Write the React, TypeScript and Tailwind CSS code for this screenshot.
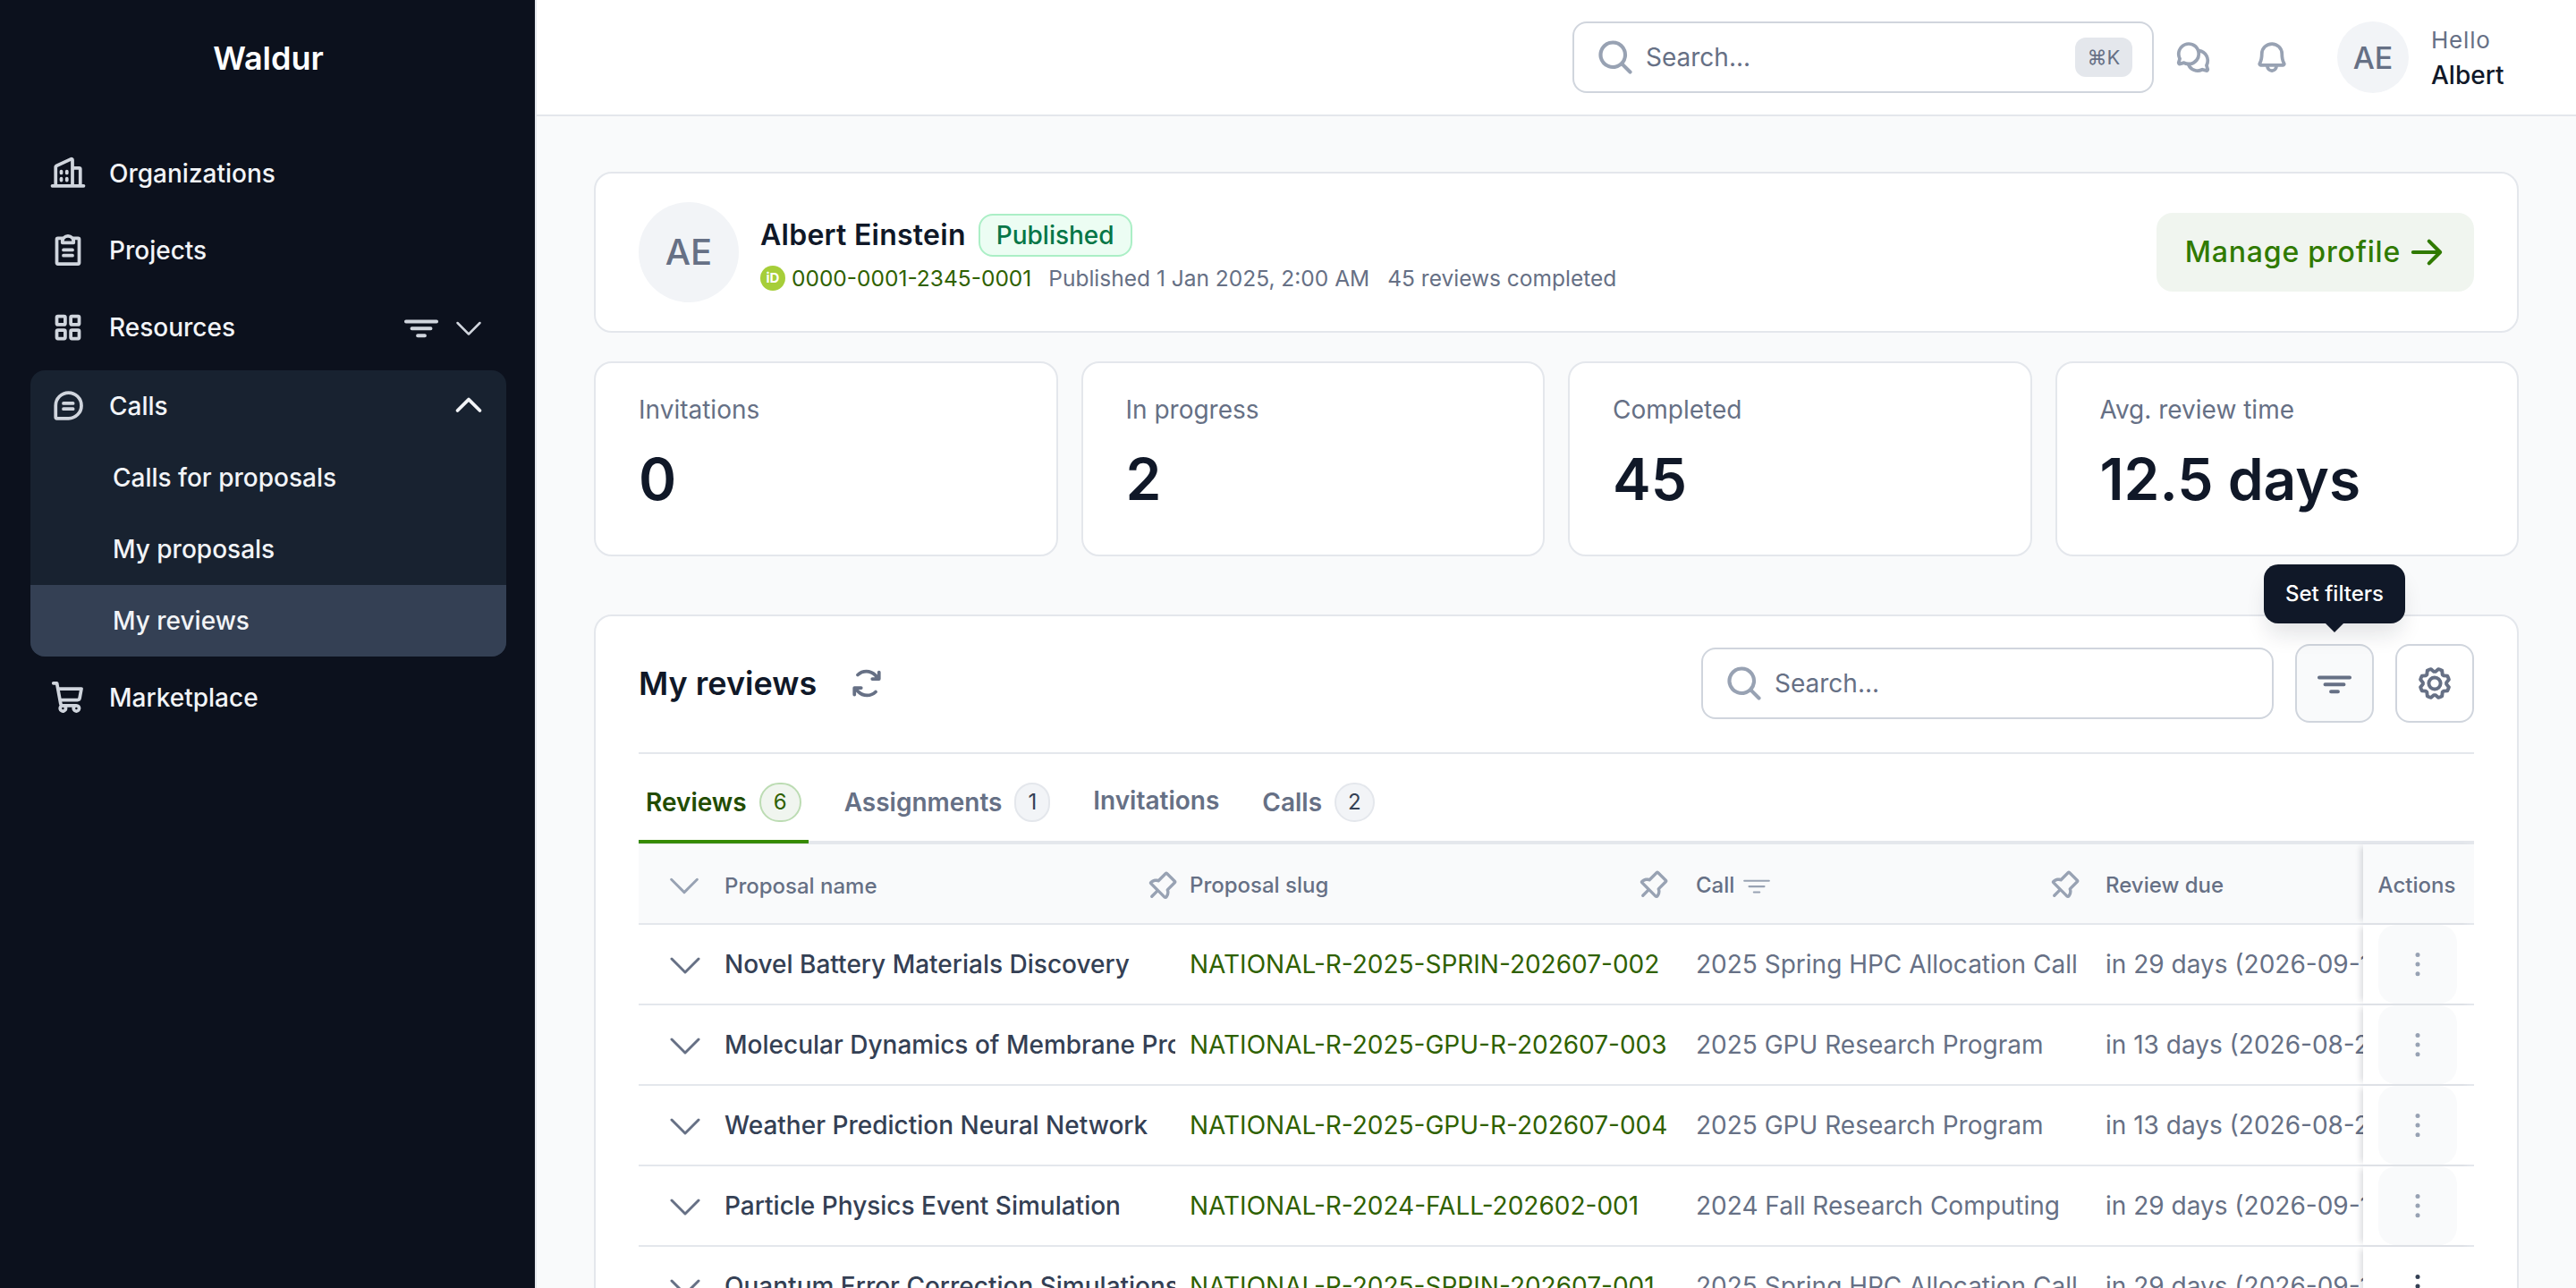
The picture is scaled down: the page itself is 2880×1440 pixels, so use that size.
import type { ReactNode } from 'react';
import {
  PiArrowRightBold,
  PiArrowsClockwiseBold,
  PiBellBold,
  PiBuildingsBold,
  PiCaretDown,
  PiCaretUpBold,
  PiChatsCircleBold,
  PiChatTeardropTextBold,
  PiClipboardTextBold,
  PiDotsThreeVerticalBold,
  PiFunnelSimple,
  PiFunnelSimpleBold,
  PiGearBold,
  PiMagnifyingGlassBold,
  PiPushPinBold,
  PiShoppingCartBold,
  PiSquaresFourBold,
} from 'react-icons/pi';

interface Review {
  name: string;
  slug: string;
  call: string;
  due: string;
}

const reviews: Review[] = [
  { name: 'Novel Battery Materials Discovery', slug: 'NATIONAL-R-2025-SPRIN-202607-002', call: '2025 Spring HPC Allocation Call', due: 'in 29 days (2026-09-15)' },
  { name: 'Molecular Dynamics of Membrane Proteins', slug: 'NATIONAL-R-2025-GPU-R-202607-003', call: '2025 GPU Research Program', due: 'in 13 days (2026-08-28)' },
  { name: 'Weather Prediction Neural Network', slug: 'NATIONAL-R-2025-GPU-R-202607-004', call: '2025 GPU Research Program', due: 'in 13 days (2026-08-28)' },
  { name: 'Particle Physics Event Simulation', slug: 'NATIONAL-R-2024-FALL-202602-001', call: '2024 Fall Research Computing', due: 'in 29 days (2026-09-15)' },
  { name: 'Quantum Error Correction Simulations', slug: 'NATIONAL-R-2025-SPRIN-202607-001', call: '2025 Spring HPC Allocation Call', due: 'in 29 days (2026-09-15)' },
];

const stats = [
  { label: 'Invitations', value: '0' },
  { label: 'In progress', value: '2' },
  { label: 'Completed', value: '45' },
  { label: 'Avg. review time', value: '12.5 days' },
];

function NavItem({ icon, label, trailing }: { icon: ReactNode; label: string; trailing?: ReactNode }) {
  return (
    <div className="flex h-[80px] items-center px-[22px] text-[28px] font-medium text-[#f2f4f7]">
      <span className="flex w-[40px] justify-center text-[40px] text-[#d0d5dd]">{icon}</span>
      <span className="ml-[26px] flex-1">{label}</span>
      {trailing}
    </div>
  );
}

function Sidebar() {
  return (
    <aside className="flex w-[598px] shrink-0 flex-col bg-[#0c111d] pl-[34px] pr-[32px]">
      <div className="flex h-[130px] shrink-0 items-center justify-center text-[36px] font-semibold text-white">Waldur</div>
      <nav className="mt-[24px] flex flex-col gap-[6px]">
        <NavItem icon={<PiBuildingsBold />} label="Organizations" />
        <NavItem icon={<PiClipboardTextBold />} label="Projects" />
        <NavItem
          icon={<PiSquaresFourBold />}
          label="Resources"
          trailing={
            <span className="flex items-center gap-[12px] text-[#d0d5dd]">
              <PiFunnelSimpleBold className="text-[42px]" />
              <PiCaretDown className="text-[40px]" />
            </span>
          }
        />
        <div className="mt-[2px] overflow-hidden rounded-[16px] bg-[#182230]">
          <NavItem icon={<PiChatTeardropTextBold />} label="Calls" trailing={<PiCaretUpBold className="text-[40px] text-[#f2f4f7]" />} />
          <div className="flex h-[80px] items-center pl-[92px] text-[28px] font-medium text-[#f2f4f7]">Calls for proposals</div>
          <div className="flex h-[80px] items-center pl-[92px] text-[28px] font-medium text-[#f2f4f7]">My proposals</div>
          <div className="flex h-[80px] items-center bg-[#344054] pl-[92px] text-[28px] font-medium text-[#f2f4f7]">My reviews</div>
        </div>
        <NavItem icon={<PiShoppingCartBold />} label="Marketplace" />
      </nav>
    </aside>
  );
}

function Topbar() {
  return (
    <header className="flex h-[130px] shrink-0 items-center border-b-2 border-[#e4e7ec] bg-white pr-[80px]">
      <div className="ml-auto flex h-[80px] w-[650px] items-center rounded-[16px] border-2 border-[#d0d5dd] pl-[24px] pr-[22px]">
        <PiMagnifyingGlassBold className="text-[44px] text-[#98a2b3]" />
        <span className="ml-[12px] flex-1 text-[28px] text-[#667085]">Search...</span>
        <span className="flex h-[44px] w-[64px] items-center justify-center rounded-[12px] bg-[#e4e7ec] font-['Inter','DejaVu_Sans',sans-serif] text-[22px] text-[#667085]">⌘K</span>
      </div>
      <PiChatsCircleBold className="ml-[24px] text-[40px] text-[#98a2b3]" />
      <PiBellBold className="ml-[48px] text-[40px] text-[#98a2b3]" />
      <div className="ml-[53px] flex h-[80px] w-[80px] items-center justify-center rounded-full bg-[#f2f4f7] text-[34px] font-medium text-[#667085]">AE</div>
      <div className="ml-[25px] flex w-[82px] flex-col">
        <span className="text-[26px] leading-[40px] tracking-[0.8px] text-[#667085]">Hello</span>
        <span className="text-[28px] font-medium leading-[38px] text-[#101828]">Albert</span>
      </div>
    </header>
  );
}

function ProfileCard() {
  return (
    <div className="flex h-[180px] items-center rounded-[20px] border-2 border-[#e4e7ec] bg-white px-[48px]">
      <div className="flex h-[112px] w-[112px] items-center justify-center rounded-full bg-[#f2f4f7] text-[40px] font-medium text-[#667085]">AE</div>
      <div className="ml-[24px] flex-1">
        <div className="flex items-center">
          <span className="text-[32px] font-semibold tracking-[0.25px] text-[#101828]">Albert Einstein</span>
          <span className="ml-[14px] flex h-[48px] items-center rounded-[16px] border-2 border-[#abefc6] bg-[#ecfdf3] px-[18px] text-[28px] font-medium text-[#067647]">Published</span>
        </div>
        <div className="mt-[10px] flex items-center text-[24.5px] leading-[28px] text-[#667085]">
          <span className="flex h-[28px] w-[28px] items-center justify-center rounded-full bg-[#a6ce39] text-[15px] font-bold text-white">iD</span>
          <span className="ml-[7px] text-[#2f6100]">0000-0001-2345-0001</span>
          <span className="ml-[19px]">Published 1 Jan 2025, 2:00 AM</span>
          <span className="ml-[20px]">45 reviews completed</span>
        </div>
      </div>
      <button className="flex h-[88px] items-center gap-[7px] rounded-[18px] bg-[#f0f5ef] pl-[32px] pr-[31px] text-[32px] font-medium tracking-[0.8px] text-[#307a00]">
        Manage profile
        <PiArrowRightBold className="text-[44px]" />
      </button>
    </div>
  );
}

function Tab({ label, count, active }: { label: string; count?: string; active?: boolean }) {
  return (
    <div className={`flex h-[100px] items-center gap-[14px] border-b-4 px-2 pt-[12px] ${active ? 'border-[#368a00]' : 'border-transparent'}`}>
      <span className={`text-[28px] font-semibold ${active ? 'text-[#224c00]' : 'text-[#667085]'} ${count ? '' : 'pb-[4px]'}`}>{label}</span>
      {count && (
        <span className={`flex h-[44px] items-center justify-center rounded-full border-2 text-[24px] ${active ? 'border-[#bcdcb3] bg-[#f0f5ef] px-[14px] text-[#2f6100]' : 'border-[#e4e7ec] bg-[#f2f4f7] px-[13px] text-[#344054]'}`}>{count}</span>
      )}
    </div>
  );
}

function HeadCell({ label, pin, funnel, className }: { label: string; pin?: boolean; funnel?: boolean; className: string }) {
  return (
    <div className={`flex items-center pt-[3px] ${className}`}>
      <span className="text-[24px] font-medium text-[#667085]">{label}</span>
      {funnel && <PiFunnelSimple className="ml-[8px] text-[34px] text-[#98a2b3]" />}
      {pin && <PiPushPinBold className="ml-auto text-[36px] text-[#98a2b3]" />}
    </div>
  );
}

function ReviewRow({ review, last }: { review: Review; last?: boolean }) {
  return (
    <div className="grid h-[90px] grid-cols-[608px_558px_458px_304px_124px] border-b-2 border-[#e4e7ec] text-[28px]">
      <div className="relative overflow-hidden whitespace-nowrap">
        <div className="flex h-full items-center">
          <PiCaretDown className="ml-[28px] shrink-0 text-[48px] text-[#667085]" />
          <span className="ml-[20px] mr-[8px] overflow-hidden font-medium text-[#344054]">{review.name}</span>
        </div>
      </div>
      <div className="flex items-center overflow-hidden whitespace-nowrap pl-[8px] text-[#2f6100]">{review.slug}</div>
      <div className="flex items-center overflow-hidden whitespace-nowrap pl-[16px] text-[#667085]">{review.call}</div>
      <div className="flex items-center overflow-hidden whitespace-nowrap pl-[16px] text-[#667085]">{review.due}</div>
      <div className="flex items-start justify-center bg-white pr-[2px] shadow-[-6px_0_6px_-3px_rgba(16,24,40,0.14)]">
        <div className={`flex h-[88px] w-[88px] items-center justify-center rounded-[20px] ${last ? 'text-[#344054]' : 'bg-[#f9fafb] text-[#98a2b3]'}`}>
          <PiDotsThreeVerticalBold className="text-[40px]" />
        </div>
      </div>
    </div>
  );
}

function ReviewsCard() {
  return (
    <div className="relative mt-[65px] rounded-t-[20px] border-2 border-[#e4e7ec] bg-white px-[48px]">
      <div className="flex items-center border-b-2 border-[#e4e7ec] pb-[33px] pt-[31px]">
        <h2 className="text-[36px] font-semibold text-[#101828]">My reviews</h2>
        <PiArrowsClockwiseBold className="ml-[36px] text-[40px] text-[#667085]" />
        <div className="ml-auto flex h-[80px] w-[640px] items-center rounded-[16px] border-2 border-[#d0d5dd] pl-[24px]">
          <PiMagnifyingGlassBold className="text-[44px] text-[#98a2b3]" />
          <span className="ml-[12px] text-[28px] text-[#667085]">Search...</span>
        </div>
        <div className="ml-[24px] flex h-[88px] w-[88px] items-center justify-center rounded-[16px] border-2 border-[#d0d5dd] bg-[#f9fafb]">
          <PiFunnelSimpleBold className="text-[42px] text-[#667085]" />
        </div>
        <div className="ml-[24px] flex h-[88px] w-[88px] items-center justify-center rounded-[16px] border-2 border-[#d0d5dd]">
          <PiGearBold className="text-[42px] text-[#667085]" />
        </div>
      </div>

      {/* tooltip over the filter button */}
      <div className="absolute left-[1865px] top-[-58px] flex h-[66px] w-[158px] items-center justify-center rounded-[16px] bg-[#101828] text-[24px] font-medium text-white shadow-[0_16px_24px_-4px_rgba(16,24,40,0.12)]">
        Set filters
        <span className="absolute bottom-[-10px] left-[69px] h-0 w-0 border-x-[10px] border-t-[10px] border-x-transparent border-t-[#101828]" />
      </div>

      <div className="flex h-[101px] items-start gap-8 border-b-4 border-[#e4e7ec]">
        <Tab label="Reviews" count="6" active />
        <Tab label="Assignments" count="1" />
        <Tab label="Invitations" />
        <Tab label="Calls" count="2" />
      </div>

      <div className="grid h-[90px] grid-cols-[608px_558px_458px_304px_124px] border-b-2 border-[#e4e7ec] bg-[#f9fafb]">
        <div className="flex items-center pt-[2px]">
          <PiCaretDown className="ml-[28px] shrink-0 text-[46px] text-[#98a2b3]" />
          <HeadCell label="Proposal name" pin className="ml-[22px] h-full flex-1 pr-[5px]" />
        </div>
        <HeadCell label="Proposal slug" pin className="pl-[8px] pr-[14px]" />
        <HeadCell label="Call" funnel pin className="pl-[16px] pr-[12px]" />
        <HeadCell label="Review due" className="pl-[16px]" />
        <div className="flex items-center justify-center bg-[#f9fafb] pr-[4px] pt-[3px] shadow-[-6px_0_6px_-3px_rgba(16,24,40,0.14)]">
          <span className="text-[24px] font-medium text-[#667085]">Actions</span>
        </div>
      </div>
      {reviews.map((review, i) => (
        <ReviewRow key={review.slug} review={review} last={i === reviews.length - 1} />
      ))}
    </div>
  );
}

export default function App() {
  return (
    <div className="flex h-screen overflow-hidden bg-[#f9fafb] font-['Inter',sans-serif]">
      <Sidebar />
      <div className="flex min-w-0 flex-1 flex-col border-l-2 border-[#e4e7ec]">
        <Topbar />
        <main className="px-[64px] pt-[62px]">
          <ProfileCard />
          <div className="mt-[32px] grid grid-cols-4 gap-[26px]">
            {stats.map((stat) => (
              <div key={stat.label} className="h-[218px] rounded-[20px] border-2 border-[#e4e7ec] bg-white px-[48px] pt-[32px]">
                <div className="text-[28px] leading-[40px] text-[#667085]">{stat.label}</div>
                <div className="mt-[18px] text-[64px] font-semibold leading-[80px] text-[#101828]">{stat.value}</div>
              </div>
            ))}
          </div>
          <ReviewsCard />
        </main>
      </div>
    </div>
  );
}
